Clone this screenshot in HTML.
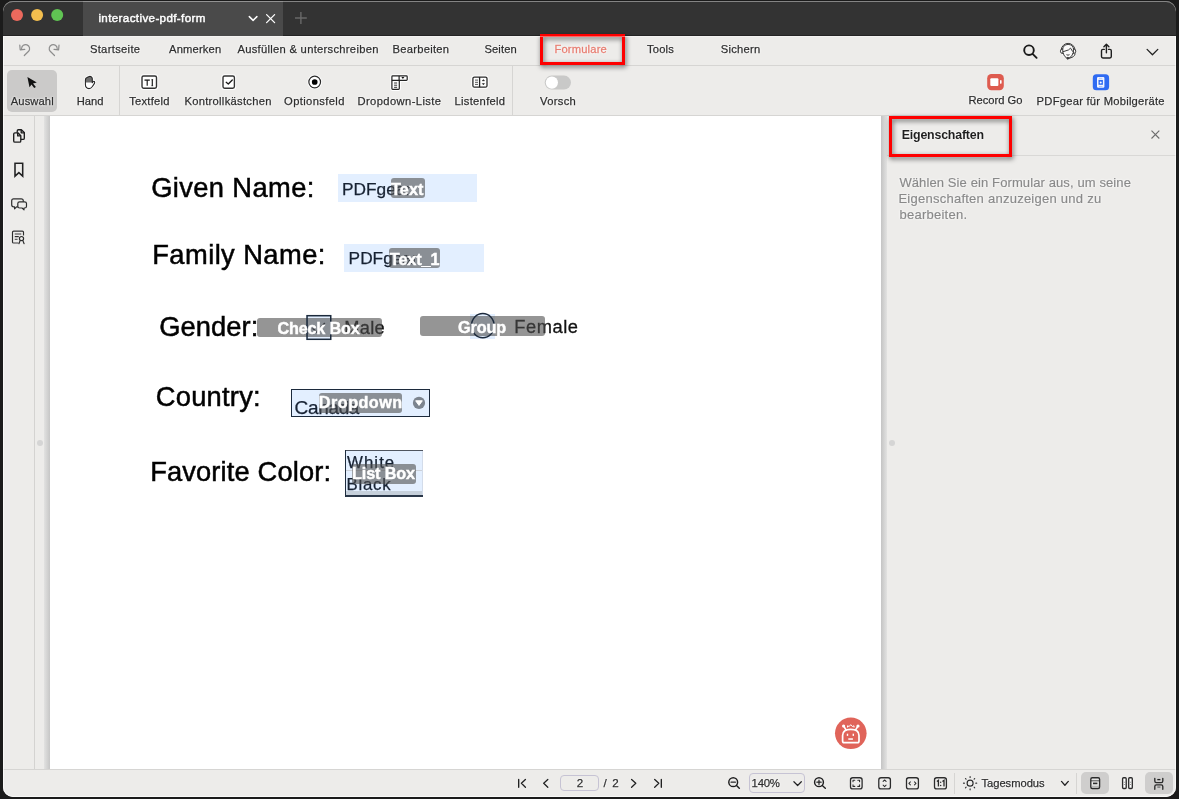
<!DOCTYPE html>
<html lang="de">
<head>
<meta charset="utf-8">
<title>interactive-pdf-form</title>
<style>
html,body{margin:0;padding:0;}
body{width:1179px;height:799px;overflow:hidden;background:#1b1b1b;font-family:"Liberation Sans",sans-serif;position:relative;}
.win{position:absolute;left:3px;top:1px;width:1173px;height:796px;border-radius:10px;overflow:hidden;background:#edecea;}
.win::after{content:"";position:absolute;left:0;top:0;right:0;bottom:0;border-radius:10px;box-shadow:inset 0 1px 0 rgba(255,255,255,.4);z-index:50;}
.hl{left:3px;top:36px;width:1173px;height:761px;box-sizing:border-box;border:1px solid rgba(255,255,255,.62);border-top-color:rgba(255,255,255,.4);border-radius:0 0 10px 10px;z-index:40;pointer-events:none;}
.g{position:absolute;left:-3px;top:-1px;width:1179px;height:799px;}
.a{position:absolute;}
svg{position:absolute;left:0;top:0;overflow:visible;will-change:opacity;opacity:.999;}
svg text{font-family:"Liberation Sans",sans-serif;white-space:pre;}
.titlebar{left:0;top:0;width:1179px;height:36px;background:#333333;box-shadow:inset 0 -1px 0 #242424;}
.tab{left:83px;top:0;width:200px;height:36px;background:#4a4a4a;}
.menubar{left:0;top:36px;width:1179px;height:29px;background:#edecea;border-bottom:1px solid #d6d5d3;}
.toolbar{left:0;top:66px;width:1179px;height:49px;background:#edecea;border-bottom:1px solid #d6d5d3;}
.sel{left:7px;top:70px;width:50px;height:42px;border-radius:5px;background:#cbcac9;}
.vsep{width:1px;background:#d6d5d3;}
.sidebar{left:0;top:116px;width:34px;height:654px;background:#edecea;border-right:1px solid #d4d3d1;}
.gutter{left:35px;top:116px;width:852px;height:654px;background:#edecea;}
.shl{left:44px;top:116px;width:6px;height:654px;background:linear-gradient(to right,#e2e2e1,#c6c6c6);}
.shr{left:881px;top:116px;width:6px;height:654px;background:linear-gradient(to right,#c4c4c4,#e2e2e1);}
.page{left:50px;top:116px;width:831px;height:654px;background:#ffffff;}
.panel{left:887px;top:116px;width:292px;height:654px;background:#edecea;}
.phead{left:887px;top:155px;width:292px;height:1px;background:#d9d8d6;}
.bottombar{left:0;top:769px;width:1179px;height:30px;background:#edecea;border-top:1px solid #d6d5d3;}
.bbtn{top:772px;height:22px;width:28px;border-radius:5px;background:#cfcecd;}
.inp{border:1px solid #c6c3d4;border-radius:4px;box-sizing:border-box;background:#edecea;}
.dot{width:6px;height:6px;border-radius:3px;background:#d5d5d5;}
.redbox{border:3.1px solid #fe0000;box-sizing:border-box;filter:drop-shadow(1px 2px 2.5px rgba(0,0,0,.6));}
.halo{filter:drop-shadow(0 0 .5px rgba(255,255,255,.9)) drop-shadow(0 0 .6px rgba(255,255,255,.9));}
.thalo{filter:drop-shadow(0 0 .7px rgba(255,255,255,.95)) drop-shadow(0 0 .8px rgba(255,255,255,.95));}
.fld{background:#e3efff;}
.lbl{background:rgba(78,78,78,.6);border-radius:3px;}
</style>
</head>
<body>
<div class="win"><div class="g">
  <div class="a titlebar"></div>
  <div class="a tab"></div>
  <div class="a menubar"></div>
  <div class="a hl"></div>
  <div class="a toolbar"></div>
  <div class="a sel"></div>
  <div class="a vsep" style="left:119px;top:66px;height:49px"></div>
  <div class="a vsep" style="left:512px;top:66px;height:49px"></div>

  <div class="a gutter"></div>
  <div class="a sidebar"></div>
  <div class="a shl"></div>
  <div class="a page"></div>
  <div class="a shr"></div>
  <div class="a panel"></div>
  <div class="a phead"></div>
  <div class="a dot" style="left:36.5px;top:439.7px"></div>
  <div class="a dot" style="left:889px;top:439.7px"></div>

  <div class="a bottombar"></div>
  <div class="a bbtn" style="left:1081.2px"></div>
  <div class="a bbtn" style="left:1145px"></div>
  <div class="a vsep" style="left:954px;top:772.5px;height:21px"></div>
  <div class="a vsep" style="left:1076.3px;top:772.5px;height:21px"></div>
  <div class="a inp" style="left:560.2px;top:775.2px;width:39px;height:16.2px"></div>
  <div class="a inp" style="left:749.2px;top:773.1px;width:55.5px;height:20px"></div>
  <!-- form fields -->
  <div class="a fld" style="left:337.5px;top:174.3px;width:139.6px;height:28px"></div>
  <div class="a fld" style="left:344.4px;top:244px;width:139.9px;height:27.7px"></div>
  <div class="a fld" style="left:306.4px;top:315px;width:25px;height:25px"></div>
  <div class="a fld" style="left:470.2px;top:313.7px;width:24.6px;height:25.1px"></div>
  <div class="a fld" style="left:290.7px;top:388.9px;width:139.3px;height:28px;box-sizing:border-box;border:1.6px solid #1c2a3c"></div>
  <div class="a fld" style="left:345px;top:449.8px;width:78px;height:46.9px"></div>
  <div class="a" style="left:345px;top:491.3px;width:78px;height:4px;background:#c6d0db"></div>
  <div class="a" style="left:345px;top:449.8px;width:78px;height:1px;background:#4f5560"></div>
  <div class="a" style="left:345px;top:495.1px;width:78px;height:1.6px;background:#2a3749"></div>
  <div class="a" style="left:345px;top:449.8px;width:1.3px;height:46.9px;background:#1f2d3f"></div>
  <div class="a" style="left:346.3px;top:469.8px;width:76.7px;height:1px;background:#cbd0d8"></div>
  <div class="a" style="left:422px;top:450.8px;width:1px;height:44px;background:#d3dcea"></div>

  <svg width="1179" height="799" viewBox="0 0 1179 799">
<g class="thalo">
<text x="89.92" y="53.00" font-size="11.2" font-weight="400" fill="#2e2e2e" letter-spacing="0.324" stroke="#2e2e2e" stroke-width="0.25">Startseite</text>
<text x="169.03" y="53.00" font-size="11.2" font-weight="400" fill="#2e2e2e" letter-spacing="0.169" stroke="#2e2e2e" stroke-width="0.25">Anmerken</text>
<text x="237.43" y="53.00" font-size="11.2" font-weight="400" fill="#2e2e2e" letter-spacing="0.291" stroke="#2e2e2e" stroke-width="0.25">Ausfüllen &amp; unterschreiben</text>
<text x="392.43" y="53.00" font-size="11.2" font-weight="400" fill="#2e2e2e" letter-spacing="0.284" stroke="#2e2e2e" stroke-width="0.25">Bearbeiten</text>
<text x="484.43" y="53.00" font-size="11.2" font-weight="400" fill="#2e2e2e" letter-spacing="0.130" stroke="#2e2e2e" stroke-width="0.25">Seiten</text>
<text x="554.45" y="53.00" font-size="11.2" font-weight="400" fill="#e67e72" letter-spacing="0.168" stroke="#e67e72" stroke-width="0.3">Formulare</text>
<text x="647.12" y="53.00" font-size="11.2" font-weight="400" fill="#2e2e2e" letter-spacing="0.132" stroke="#2e2e2e" stroke-width="0.25">Tools</text>
<text x="720.83" y="53.00" font-size="11.2" font-weight="400" fill="#2e2e2e" letter-spacing="0.223" stroke="#2e2e2e" stroke-width="0.25">Sichern</text>
<text x="10.82" y="104.50" font-size="11.2" font-weight="400" fill="#2e2e2e" letter-spacing="0.092" stroke="#2e2e2e" stroke-width="0.25">Auswahl</text>
<text x="76.83" y="104.50" font-size="11.2" font-weight="400" fill="#2e2e2e" letter-spacing="-0.058" stroke="#2e2e2e" stroke-width="0.25">Hand</text>
<text x="129.22" y="104.50" font-size="11.2" font-weight="400" fill="#2e2e2e" letter-spacing="0.231" stroke="#2e2e2e" stroke-width="0.25">Textfeld</text>
<text x="184.43" y="104.50" font-size="11.2" font-weight="400" fill="#2e2e2e" letter-spacing="0.284" stroke="#2e2e2e" stroke-width="0.25">Kontrollkästchen</text>
<text x="284.12" y="104.50" font-size="11.2" font-weight="400" fill="#2e2e2e" letter-spacing="0.368" stroke="#2e2e2e" stroke-width="0.25">Optionsfeld</text>
<text x="357.43" y="104.50" font-size="11.2" font-weight="400" fill="#2e2e2e" letter-spacing="0.409" stroke="#2e2e2e" stroke-width="0.25">Dropdown-Liste</text>
<text x="454.43" y="104.50" font-size="11.2" font-weight="400" fill="#2e2e2e" letter-spacing="0.309" stroke="#2e2e2e" stroke-width="0.25">Listenfeld</text>
<text x="540.12" y="104.50" font-size="11.2" font-weight="400" fill="#2e2e2e" letter-spacing="0.294" stroke="#2e2e2e" stroke-width="0.25">Vorsch</text>
<text x="968.42" y="104.00" font-size="11.2" font-weight="400" fill="#2e2e2e" letter-spacing="-0.016" stroke="#2e2e2e" stroke-width="0.25">Record Go</text>
<text x="1036.62" y="104.50" font-size="11.2" font-weight="400" fill="#2e2e2e" letter-spacing="0.249" stroke="#2e2e2e" stroke-width="0.25">PDFgear für Mobilgeräte</text>
<text x="901.80" y="138.90" font-size="12.4" font-weight="700" fill="#1f1f1f" letter-spacing="-0.210" >Eigenschaften</text>
<text x="899.40" y="186.60" font-size="13.0" font-weight="400" fill="#898989" letter-spacing="0.109" stroke="#898989" stroke-width="0.2">Wählen Sie ein Formular aus, um seine</text>
<text x="898.40" y="202.50" font-size="13.0" font-weight="400" fill="#898989" letter-spacing="0.253" stroke="#898989" stroke-width="0.2">Eigenschaften anzuzeigen und zu</text>
<text x="899.40" y="218.50" font-size="13.0" font-weight="400" fill="#898989" letter-spacing="0.266" stroke="#898989" stroke-width="0.2">bearbeiten.</text>
<text x="576.73" y="787.40" font-size="11.6" font-weight="400" fill="#2e2e2e" letter-spacing="0.000" stroke="#2e2e2e" stroke-width="0.25">2</text>
<text x="603.62" y="787.40" font-size="11.6" font-weight="400" fill="#2e2e2e" letter-spacing="1.104" stroke="#2e2e2e" stroke-width="0.25">/ 2</text>
<text x="751.52" y="787.20" font-size="11.4" font-weight="400" fill="#2e2e2e" letter-spacing="-0.218" stroke="#2e2e2e" stroke-width="0.25">140%</text>
<text x="981.42" y="787.30" font-size="11.2" font-weight="400" fill="#2e2e2e" letter-spacing="-0.021" stroke="#2e2e2e" stroke-width="0.25">Tagesmodus</text>
</g>
<text x="98.42" y="21.80" font-size="11.6" font-weight="400" fill="#ffffff" letter-spacing="0.376" stroke="#ffffff" stroke-width="0.45">interactive-pdf-form</text>
<text x="151.15" y="196.50" font-size="27.3" font-weight="400" fill="#000000" letter-spacing="0.389" stroke="#000" stroke-width="0.5">Given Name:</text>
<text x="152.25" y="263.80" font-size="27.3" font-weight="400" fill="#000000" letter-spacing="0.430" stroke="#000" stroke-width="0.5">Family Name:</text>
<text x="159.25" y="336.00" font-size="27.3" font-weight="400" fill="#000000" letter-spacing="0.075" stroke="#000" stroke-width="0.5">Gender:</text>
<text x="155.75" y="405.80" font-size="27.3" font-weight="400" fill="#000000" letter-spacing="0.246" stroke="#000" stroke-width="0.5">Country:</text>
<text x="150.15" y="481.20" font-size="27.3" font-weight="400" fill="#000000" letter-spacing="0.134" stroke="#000" stroke-width="0.5">Favorite Color:</text>
<text x="342.02" y="194.80" font-size="17.3" font-weight="400" fill="#172233" letter-spacing="-0.008" stroke="#172233" stroke-width="0.25">PDFgear</text>
<text x="348.62" y="264.30" font-size="17.3" font-weight="400" fill="#172233" letter-spacing="-0.008" stroke="#172233" stroke-width="0.25">PDFgear</text>
<text x="344.15" y="333.60" font-size="18.3" font-weight="400" fill="#111111" letter-spacing="0.314" stroke="#111" stroke-width="0.3">Male</text>
<text x="514.15" y="332.50" font-size="18.3" font-weight="400" fill="#111111" letter-spacing="0.582" stroke="#111" stroke-width="0.3">Female</text>
<text x="294.62" y="414.10" font-size="19.0" font-weight="400" fill="#172233" letter-spacing="-0.348" stroke="#172233" stroke-width="0.25">Canada</text>
<text x="347.02" y="468.40" font-size="16.8" font-weight="400" fill="#172233" letter-spacing="1.072" stroke="#172233" stroke-width="0.25">White</text>
<text x="346.62" y="489.60" font-size="16.8" font-weight="400" fill="#172233" letter-spacing="0.751" stroke="#172233" stroke-width="0.25">Black</text>
  <!-- checkbox tick (under label) -->
  <path d="M312.6 328.2 L316.6 332 L324.8 323" fill="none" stroke="#1a2433" stroke-width="1.5"/>
  </svg>

  <!-- grey name labels -->
  <div class="a lbl" style="left:390.6px;top:178.4px;width:34.1px;height:20px"></div>
  <div class="a lbl" style="left:389.4px;top:248px;width:50.5px;height:19.8px"></div>
  <div class="a lbl" style="left:256.5px;top:318.1px;width:125.5px;height:19.4px"></div>
  <div class="a lbl" style="left:420px;top:316.3px;width:125px;height:19.5px"></div>
  <div class="a lbl" style="left:319.1px;top:393.1px;width:82.9px;height:19.7px"></div>
  <div class="a lbl" style="left:352.4px;top:464px;width:63.2px;height:19.7px"></div>

  <svg width="1179" height="799" viewBox="0 0 1179 799">
  <rect x="307.05" y="315.7" width="23.7" height="23.6" fill="none" stroke="#1c2a3c" stroke-width="1.5"/>
  <ellipse cx="482.8" cy="325.6" rx="11.3" ry="12.1" fill="none" stroke="#1c2a3c" stroke-width="1.4"/>
  <circle cx="419" cy="402.9" r="6.1" fill="#7c848f"/>
  <path d="M415.7 400.8 L422.3 400.8 L419 405.4 Z" fill="#ffffff" stroke="#ffffff" stroke-width="1" stroke-linejoin="round"/>
<text x="391.03" y="194.80" font-size="16.2" font-weight="700" fill="#ffffff" letter-spacing="0.086" stroke="#fff" stroke-width="0.45">Text</text>
<text x="389.83" y="264.50" font-size="16.2" font-weight="700" fill="#ffffff" letter-spacing="-0.107" stroke="#fff" stroke-width="0.45">Text_1</text>
<text x="277.43" y="333.70" font-size="16.2" font-weight="700" fill="#ffffff" letter-spacing="-0.176" stroke="#fff" stroke-width="0.45">Check Box</text>
<text x="458.12" y="332.60" font-size="16.2" font-weight="700" fill="#ffffff" letter-spacing="-0.104" stroke="#fff" stroke-width="0.45">Group</text>
<text x="318.83" y="408.30" font-size="16.2" font-weight="700" fill="#ffffff" letter-spacing="0.474" stroke="#fff" stroke-width="0.45">Dropdown</text>
<text x="352.03" y="479.40" font-size="16.2" font-weight="700" fill="#ffffff" letter-spacing="-0.129" stroke="#fff" stroke-width="0.45">List Box</text>
<!-- traffic lights -->
<circle cx="17" cy="15.1" r="6" fill="#ec6a5e"/>
<circle cx="37.1" cy="15.1" r="6" fill="#f4bf4f"/>
<circle cx="57.2" cy="15.1" r="6" fill="#61c554"/>
<!-- tab controls -->
<path d="M249.3 16.6 L253.1 20.4 L256.9 16.6" fill="none" stroke="#fff" stroke-width="1.5" stroke-linecap="round" stroke-linejoin="round"/>
<path d="M266.6 14.6 L274.6 22.6 M274.6 14.6 L266.6 22.6" fill="none" stroke="#fff" stroke-width="1.3" stroke-linecap="round"/>
<path d="M295 18 H306.8 M300.9 12.1 V23.9" fill="none" stroke="#6a6a6a" stroke-width="1.4"/>
<!-- undo / redo -->
<g fill="none" stroke="#8d8d8d" stroke-width="1.2" stroke-linecap="round" stroke-linejoin="round">
<path d="M24.3 55.5 L28.6 51.3 A4 4 0 1 0 21.6 48.6 M19.8 45.2 L20.2 49.8 L24.8 49.4"/>
<path d="M54.5 55.5 L50.2 51.3 A4 4 0 1 1 57.2 48.6 M59 45.2 L58.6 49.8 L54 49.4"/>
</g>
<!-- search -->
<g fill="none" stroke="#1a1a1a" stroke-width="1.9" stroke-linecap="round">
<circle cx="1029" cy="50.2" r="4.8"/><path d="M1032.6 53.8 L1036.6 57.8"/>
</g>
<!-- headset -->
<circle cx="1068.1" cy="51.3" r="7" fill="#fff" opacity=".75"/>
<g fill="none" stroke="#3a3a3a" stroke-width="1" stroke-linecap="round" stroke-linejoin="round">
<path d="M1061.2 49.2 A7 7 0 0 1 1075 49.2"/>
<path d="M1062.6 49 A5.6 5.6 0 0 1 1073.6 49"/>
<path d="M1062.4 48.8 Q1060.4 49 1060.4 51.2 Q1060.4 53.4 1062.4 53.6 Z"/>
<path d="M1073.8 48.8 Q1075.8 49 1075.8 51.2 Q1075.8 53.4 1073.8 53.6 Z"/>
<path d="M1063.4 51.6 L1068.6 49.9 L1070.5 48.1 L1072.6 51.4"/>
<path d="M1063.2 53 Q1064.4 58 1068 58 Q1071.6 58 1073 53"/>
<path d="M1066.8 54.9 Q1068 55.7 1069.2 54.9"/>
<path d="M1075.2 53.8 Q1074.6 57.6 1068.6 58.3"/>
<circle cx="1067.8" cy="58.3" r="0.9" fill="#3a3a3a"/>
</g>
<!-- share -->
<g fill="none" stroke="#1f1f1f" stroke-width="1.4" stroke-linecap="round" stroke-linejoin="round">
<path d="M1104.3 49.4 H1102.9 Q1101.5 49.4 1101.5 50.8 V56.6 Q1101.5 58 1102.9 58 H1109.9 Q1111.3 58 1111.3 56.6 V50.8 Q1111.3 49.4 1109.9 49.4 H1108.5"/>
<path d="M1106.4 52.8 V44.4 M1103.9 46.7 L1106.4 44.2 L1108.9 46.7"/>
</g>
<path d="M1147.1 49.4 L1152.45 54.7 L1157.8 49.4" fill="none" stroke="#222" stroke-width="1.3" stroke-linecap="round" stroke-linejoin="round"/>
<!-- cursor -->
<path d="M27.4 76.9 L36.8 82.6 L33 83.5 L35.9 87 L34.2 88.1 L31.5 84.5 L29.5 87.3 Z" fill="#111"/>
<!-- hand -->
<g>
<path id="hand" d="M85.4 79.9 Q85.4 78.1 87 77.5 L89.3 76.5 Q90 76.2 90.7 76.6 L91.4 77 Q92.3 77.5 92.3 78.8 V82.7 L93.1 81.7 Q93.9 80.9 94.5 81.7 Q95 82.5 94.3 83.6 L92.4 86.5 Q90.9 88.6 89 88.6 Q85.4 88.4 85.4 84.6 Z" fill="#fff" stroke="#fff" stroke-width="2.8" stroke-linejoin="round"/>
<path d="M85.4 79.9 Q85.4 78.1 87 77.5 L89.3 76.5 Q90 76.2 90.7 76.6 L91.4 77 Q92.3 77.5 92.3 78.8 V82.4 H85.4 Z" fill="#6e6e6e"/>
<path d="M85.4 79.9 Q85.4 78.1 87 77.5 L89.3 76.5 Q90 76.2 90.7 76.6 L91.4 77 Q92.3 77.5 92.3 78.8 V82.7 L93.1 81.7 Q93.9 80.9 94.5 81.7 Q95 82.5 94.3 83.6 L92.4 86.5 Q90.9 88.6 89 88.6 Q85.4 88.4 85.4 84.6 Z" fill="none" stroke="#262626" stroke-width="1.1" stroke-linejoin="round"/>
</g>
<!-- textfield icon -->
<rect x="141.3" y="75.3" width="15.9" height="13.6" rx="2" fill="#fff" stroke="#fff" stroke-width="2"/>
<rect x="142" y="76" width="14.5" height="12.2" rx="1.6" fill="#fff" stroke="#333" stroke-width="1.4"/>
<path d="M144.5 80.1 H149.8" fill="none" stroke="#1a1a1a" stroke-width="1.3"/><path d="M147.2 80.1 V85.7 M152.3 79.6 V85.8" fill="none" stroke="#1a1a1a" stroke-width="1.15"/>
<path d="M151.5 79.7 H153.1 M151.5 85.7 H153.1" fill="none" stroke="#1a1a1a" stroke-width="0.9"/>
<!-- checkbox icon -->
<rect x="222.3" y="75.3" width="12.8" height="13.6" rx="2" fill="#fff" stroke="#fff" stroke-width="2"/>
<rect x="223" y="76" width="11.4" height="12.2" rx="1.6" fill="#fff" stroke="#333" stroke-width="1.4"/>
<path d="M226.2 82.3 L228.3 84 L232.3 80" fill="none" stroke="#1a1a1a" stroke-width="1.3" stroke-linecap="round" stroke-linejoin="round"/>
<!-- radio icon -->
<circle cx="314.7" cy="82" r="6.6" fill="#fff" stroke="#fff" stroke-width="1.4"/>
<circle cx="314.7" cy="82" r="5.85" fill="#fff" stroke="#2a2a2a" stroke-width="1.2"/>
<circle cx="314.7" cy="82" r="2.85" fill="#000"/>
<!-- dropdown-list icon -->
<path d="M392.7 75.9 H406.4 Q407.2 75.9 407.2 76.7 V79.5 Q407.2 80.3 406.4 80.3 H399.3 V88.6 Q399.3 89.4 398.5 89.4 H392.7 Q391.9 89.4 391.9 88.6 V76.7 Q391.9 75.9 392.7 75.9 Z" fill="#fff" stroke="#fff" stroke-width="3.2" stroke-linejoin="round"/>
<path d="M392.7 75.9 H406.4 Q407.2 75.9 407.2 76.7 V79.5 Q407.2 80.3 406.4 80.3 H399.3 V88.6 Q399.3 89.4 398.5 89.4 H392.7 Q391.9 89.4 391.9 88.6 V76.7 Q391.9 75.9 392.7 75.9 Z" fill="#fff" stroke="#222" stroke-width="1.2" stroke-linejoin="round"/>
<path d="M391.9 80.3 H399.3 M399.1 75.9 V80.3" fill="none" stroke="#222" stroke-width="1.2"/>
<path d="M401.4 77 H404.4 L402.9 79 Z" fill="#111"/>
<path d="M394.1 83 H397.1 M394.1 85.2 H397.1 M394.1 87.3 H397.1" fill="none" stroke="#333" stroke-width="1"/>
<!-- listfield icon -->
<rect x="472.2" y="76.5" width="15.4" height="11.3" rx="2" fill="#fff" stroke="#fff" stroke-width="2"/>
<rect x="472.9" y="77.1" width="14.1" height="10.1" rx="1.5" fill="#fff" stroke="#2a2a2a" stroke-width="1.3"/>
<path d="M479.6 77.1 V87.2" fill="none" stroke="#222" stroke-width="1.3"/>
<path d="M475 80.1 H478 M475 82.3 H478 M475 84.4 H478" fill="none" stroke="#444" stroke-width="0.9"/>
<path d="M482.3 80.8 L483.4 79.6 L484.5 80.8 Z M482.3 83.6 L483.4 84.8 L484.5 83.6 Z" fill="#111" stroke="#111" stroke-width="0.5" stroke-linejoin="round"/>
<!-- toggle -->
<rect x="544.7" y="75.6" width="26.3" height="14" rx="7" fill="#c9c9c8"/>
<circle cx="551.9" cy="82.6" r="6.1" fill="#fff"/>
<!-- record go -->
<rect x="987.2" y="74" width="16.6" height="16.3" rx="4.2" fill="#de5b4f"/>
<rect x="990.3" y="78.2" width="8.1" height="7.8" rx="1" fill="#fff"/>
<rect x="1000" y="79.9" width="1.6" height="4" rx="0.8" fill="#fff"/>
<!-- mobile -->
<rect x="1092.8" y="74.3" width="16.3" height="16" rx="3.6" fill="#2f6bf2"/>
<rect x="1097" y="76.9" width="7.4" height="10.9" rx="1.2" fill="#f2f5ff"/>
<rect x="1098.5" y="79.9" width="4.4" height="4.9" fill="#2f6bf2"/>
<path d="M1099 78.3 H1102.4 M1099 86.5 H1102.4" stroke="#a9c2fa" stroke-width="0.9" fill="none"/>
<circle cx="1100.7" cy="82.5" r="1" fill="#fff"/>
<!-- sidebar icons -->
<g class="halo">
<g fill="#edecea" stroke="#1c1c1c" stroke-width="1.35" stroke-linejoin="round">
<path d="M17.2 130.9 Q17.2 129.7 18.4 129.7 H21.4 L24.3 132.6 V138.2 Q24.3 139.4 23.1 139.4 H18.4 Q17.2 139.4 17.2 138.2 Z"/>
<path d="M21.2 129.9 V132.8 H24.2" fill="none"/>
<path d="M13.7 134 Q13.7 132.8 14.9 132.8 H17.9 L20.8 135.7 V140.9 Q20.8 142.1 19.6 142.1 H14.9 Q13.7 142.1 13.7 140.9 Z"/>
<path d="M17.7 133 V135.9 H20.7" fill="none"/>
</g>
<path d="M15 163.3 H22.7 V176.2 L18.85 172.7 L15 176.2 Z" fill="none" stroke="#222" stroke-width="1.6" stroke-linejoin="miter"/>
<g fill="#edecea" stroke="#2c2c2c" stroke-width="1.2" stroke-linejoin="round">
<path d="M13.5 198.8 H21.3 Q23.3 198.8 23.3 200.8 V204.8 Q23.3 206.8 21.3 206.8 H16.6 L14.6 208.9 V206.8 H13.5 Q11.7 206.8 11.7 204.8 V200.8 Q11.7 198.8 13.5 198.8 Z"/>
<path d="M19.6 201.8 H24.6 Q26.5 201.8 26.5 203.6 V206.2 Q26.5 208 24.6 208 H24 V209.9 L22 208 H19.6 Q17.8 208 17.8 206.2 V203.6 Q17.8 201.8 19.6 201.8 Z"/>
</g>
<g fill="none" stroke="#2c2c2c" stroke-width="1.2" stroke-linejoin="round">
<path d="M18.4 243 H13.6 Q12.5 243 12.5 241.9 V232.3 Q12.5 231.2 13.6 231.2 H22.4 Q23.5 231.2 23.5 232.3 V235.4"/>
<path d="M14.7 234 H21.3 M14.7 236.6 H18.8 M14.7 239.2 H17.6" stroke-width="1.1"/>
<circle cx="21.5" cy="238.6" r="2.1" fill="#edecea"/>
<path d="M20.2 240.6 L18.9 243.7 M22.8 240.6 L24.1 243.7" stroke-linecap="round"/>
</g>
</g>
<!-- panel close -->
<path d="M1151.5 130.7 L1159.3 138.5 M1159.3 130.7 L1151.5 138.5" fill="none" stroke="#6c6c6c" stroke-width="1.1"/>
<!-- robot -->
<circle cx="850.8" cy="733.3" r="15.8" fill="#e0645a"/>
<g fill="none" stroke="#fff" stroke-width="1.7" stroke-linecap="round" stroke-linejoin="round">
<path d="M842.6 741 V735.4 Q842.6 729.3 850.8 729.3 Q859 729.3 859 735.4 V741 Q859 742.7 857.3 742.7 H844.3 Q842.6 742.7 842.6 741 Z"/>
<path d="M844 726.6 L846 729.9 M857.6 726.6 L855.6 729.9"/>
<path d="M847.5 727.1 V725.8 L849.2 726.5 L850.7 724.7 L852.3 726.5 L854 725.8 V727.1" stroke-width="1"/>
</g>
<circle cx="843.6" cy="726" r="1.6" fill="#fff"/><circle cx="858" cy="726" r="1.6" fill="#fff"/>
<rect x="846.8" y="733.7" width="1.4" height="2.2" fill="#fff"/><rect x="852.6" y="733.7" width="1.4" height="2.2" fill="#fff"/>
<rect x="848.3" y="738.3" width="4.6" height="1.5" fill="#fff"/>
<!-- bottom nav -->
<g class="halo">
<g fill="none" stroke="#222" stroke-width="1.4" stroke-linecap="round" stroke-linejoin="round">
<path d="M518.7 779.5 V787.2 M525.4 779.5 L521.4 783.35 L525.4 787.2"/>
<path d="M547.8 779.5 L543.7 783.35 L547.8 787.2"/>
<path d="M631.6 779.5 L635.8 783.35 L631.6 787.2"/>
<path d="M654.7 779.5 L658.8 783.35 L654.7 787.2 M661.3 779.5 V787.2"/>
</g>
<!-- zoom -->
<g fill="none" stroke="#1f1f1f" stroke-width="1.5" stroke-linecap="round">
<circle cx="733.2" cy="782.2" r="4.4"/><path d="M736.5 785.5 L739.3 788.3"/><path d="M731 782.2 H735.4" stroke-width="1.2"/>
<circle cx="819" cy="782.2" r="4.4"/><path d="M822.3 785.5 L825.3 788.3"/><path d="M816.8 782.2 H821.2 M819 780 V784.4" stroke-width="1.2"/>
</g>
<path d="M793.9 781.8 L797.6 785.5 L801.3 781.8" fill="none" stroke="#222" stroke-width="1.3" stroke-linecap="round" stroke-linejoin="round"/>
<!-- fit icons -->
<g fill="none" stroke="#2c2c2c" stroke-width="1.35" stroke-linejoin="round" stroke-linecap="round">
<rect x="850.5" y="777.7" width="11.6" height="11.2" rx="2.2"/>
<path d="M853 781.8 V780.2 H854.8 M857.8 780.2 H859.6 V781.8 M859.6 784.8 V786.4 H857.8 M854.8 786.4 H853 V784.8" stroke-width="1.1"/>
<rect x="878.8" y="777.7" width="11.6" height="11.2" rx="2.2"/>
<path d="M883.1 781.4 L884.6 780 L886.1 781.4 M883.1 785.2 L884.6 786.6 L886.1 785.2" stroke-width="1.1"/>
<rect x="906.5" y="777.7" width="11.9" height="11.2" rx="2.2"/>
<path d="M910.4 781.8 L908.9 783.3 L910.4 784.8 M914.5 781.8 L916 783.3 L914.5 784.8" stroke-width="1.1"/>
<rect x="934.5" y="777.7" width="11.9" height="11.2" rx="2.2"/>
</g>
<path d="M936.8 781.5 L938.4 780.3 V786.5 M942.4 781.5 L944 780.3 V786.5" fill="none" stroke="#2a2a2a" stroke-width="1.35" stroke-linejoin="miter"/><circle cx="940.7" cy="782.3" r="0.75" fill="#2a2a2a"/><circle cx="940.7" cy="785.5" r="0.75" fill="#2a2a2a"/>
<!-- sun -->
<g fill="none" stroke="#2a2a2a" stroke-width="1.2" stroke-linecap="round">
<circle cx="970.1" cy="783.2" r="3"/>
<path d="M970.1 777.5 V776.6 M970.1 788.9 V789.8 M964.4 783.2 H963.5 M975.8 783.2 H976.7 M966.1 779.2 L965.5 778.6 M974.1 779.2 L974.7 778.6 M966.1 787.2 L965.5 787.8 M974.1 787.2 L974.7 787.8"/>
</g>
<path d="M1061.5 781.4 L1064.9 785.2 L1068.3 781.4" fill="none" stroke="#222" stroke-width="1.4" stroke-linecap="round" stroke-linejoin="round"/>
</g>
<!-- view icons -->
<g fill="none" stroke="#2c2c2c" stroke-width="1.35" stroke-linejoin="round">
<rect x="1090.8" y="777.7" width="8.8" height="10.8" rx="1.5" fill="#e6e6e5"/>
<path d="M1091 780.8 H1099.4" stroke-width="0.8"/><path d="M1093 783.4 H1097.4" stroke-width="1.6"/><path d="M1091 786.3 H1099.4" stroke-width="0.6" stroke="#888"/>
<rect x="1122.6" y="777.7" width="3.6" height="10.8" rx="1" fill="#fff"/>
<rect x="1128.7" y="777.7" width="3.6" height="10.8" rx="1" fill="#fff"/>
<path d="M1124.4 781.8 V782.6 M1124.4 784 V784.8 M1130.5 781.8 V782.6 M1130.5 784 V784.8" stroke-width="0.9" stroke="#666"/>
<path d="M1154.8 778.3 V781 Q1154.8 782.6 1156.4 782.6 H1161.2 Q1162.8 782.6 1162.8 781 V778.3 M1154.8 789.2 V786.5 Q1154.8 784.9 1156.4 784.9 H1161.2 Q1162.8 784.9 1162.8 786.5 V789.2" stroke-linecap="round" fill="none"/>
<path d="M1157.3 779.6 H1160.4" stroke-width="1.3" stroke="#222"/><path d="M1157.3 787.1 H1160.4" stroke-width="1.4" stroke="#777"/>
</g>

  </svg>

  <div class="a redbox" style="left:540px;top:34.1px;width:85.1px;height:30.7px"></div>
  <div class="a redbox" style="left:889.3px;top:115.5px;width:123px;height:41px"></div>

</div></div>
</body>
</html>
